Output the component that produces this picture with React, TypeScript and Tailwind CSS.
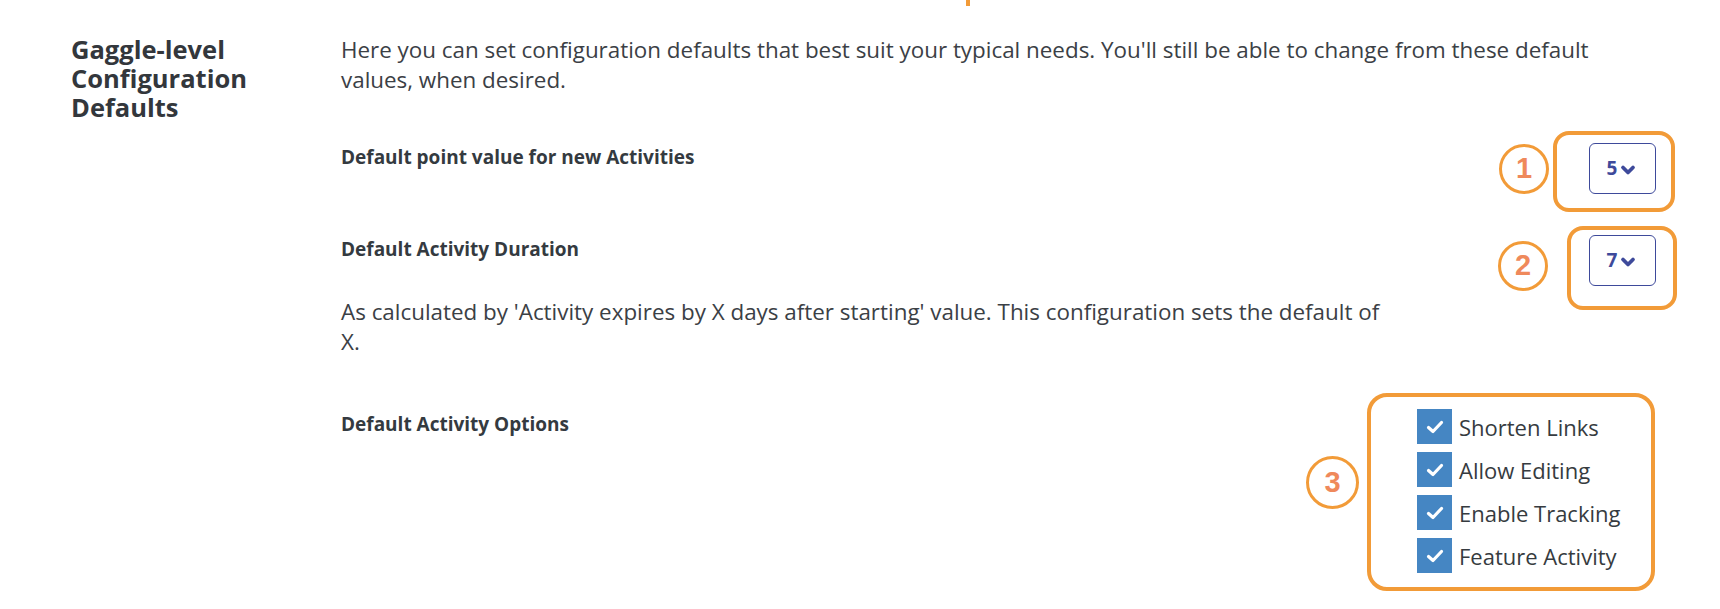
import { ChevronDown } from 'lucide-react';

// Orange callout pieces drawn over the form controls
function Callout({ className }: { className: string }) {
  return <div className={`pointer-events-none absolute border-[4px] border-[#f29b38] ${className}`} />;
}

function Marker({ n, className }: { n: number; className: string }) {
  return (
    <div
      className={`pointer-events-none absolute flex items-center justify-center rounded-full border-[3.5px] border-[#f29b38] bg-white font-['Liberation_Sans',sans-serif] text-[29px] font-bold text-[#ef895b] ${className}`}
    >
      {n}
    </div>
  );
}

function NumberSelect({ value }: { value: number }) {
  return (
    <button
      type="button"
      className="flex h-[51px] w-[67px] items-center justify-center gap-[1px] rounded-[6px] border-[1.5px] border-[#3e4a9b] bg-white text-[19px] font-bold text-[#3e4a9b]"
    >
      {value}
      <ChevronDown size={20} strokeWidth={4.5} className="mt-[2px]" />
    </button>
  );
}

function CheckBox() {
  return (
    <span className="flex h-[35px] w-[35px] shrink-0 items-center justify-center bg-[#4586c3]">
      <svg width="18" height="14" viewBox="0 0 18 14" fill="none">
        <path d="M2.5 7.5 7 11.5 15.5 2.5" stroke="white" strokeWidth="3.2" strokeLinecap="round" strokeLinejoin="round" />
      </svg>
    </span>
  );
}

const options = ['Shorten Links', 'Allow Editing', 'Enable Tracking', 'Feature Activity'];

export default function App() {
  return (
    <div className="relative flex min-h-[609px] bg-white pl-[71px] pr-[64px] pt-[35px] font-['Open_Sans',sans-serif] text-[#343a40]">
      {/* tail of the callout from the section above */}
      <div className="absolute left-[966px] top-0 h-[6px] w-[4px] bg-[#f29b38]" />

      <h2 className="w-[270px] shrink-0 pr-[40px] text-[25.5px] font-bold leading-[29px] text-[#33373c]">
        Gaggle-level Configuration Defaults
      </h2>

      <div className="flex-1">
        <p className="text-[22.4px] leading-[30px] text-[#3b4045]">
          Here you can set configuration defaults that best suit your typical needs. You'll still be able to change from
          these default values, when desired.
        </p>

        {/* Default points */}
        <div className="mt-[48px] flex gap-[26px]">
          <div className="flex-1 pt-[1px] text-[19px] font-bold leading-[26px]">Default point value for new Activities</div>
          <div className="flex w-[239px] justify-end">
            <div className="relative">
              <NumberSelect value={5} />
              <Callout className="-left-[36px] -top-[12px] h-[81px] w-[122px] rounded-[16px]" />
              <Marker n={1} className="-left-[90px] top-[1px] h-[50px] w-[50px]" />
            </div>
          </div>
        </div>

        {/* Default duration */}
        <div className="mt-[41px] flex gap-[26px]">
          <div className="flex-1">
            <div className="pt-[1px] text-[19px] font-bold leading-[26px]">Default Activity Duration</div>
            <p className="mt-[35px] max-w-[1048px] text-[22.4px] leading-[30px] text-[#3b4045]">
              As calculated by 'Activity expires by X days after starting' value. This configuration sets the default of
              X.
            </p>
          </div>
          <div className="flex w-[239px] justify-end">
            <div className="relative h-fit">
              <NumberSelect value={7} />
              <Callout className="-left-[22px] -top-[9px] h-[84px] w-[110px] rounded-[16px]" />
              <Marker n={2} className="-left-[91px] top-[6px] h-[50px] w-[50px]" />
            </div>
          </div>
        </div>

        {/* Default options */}
        <div className="mt-[52px] flex gap-[26px]">
          <div className="flex-1 pt-[2px] text-[19px] font-bold leading-[26px]">Default Activity Options</div>
          <div className="w-[239px]">
            <div className="relative flex w-fit flex-col gap-[8px]">
              {options.map((o) => (
                <label key={o} className="flex items-center gap-[7px]">
                  <CheckBox />
                  <span className="whitespace-nowrap text-[22px] leading-[30px] text-[#363b40]">{o}</span>
                </label>
              ))}
              <Callout className="-left-[50px] -top-[16px] h-[198px] w-[288px] rounded-[20px]" />
              <Marker n={3} className="-left-[111px] top-[47px] h-[53px] w-[53px]" />
            </div>
          </div>
        </div>
      </div>
    </div>
  );
}
